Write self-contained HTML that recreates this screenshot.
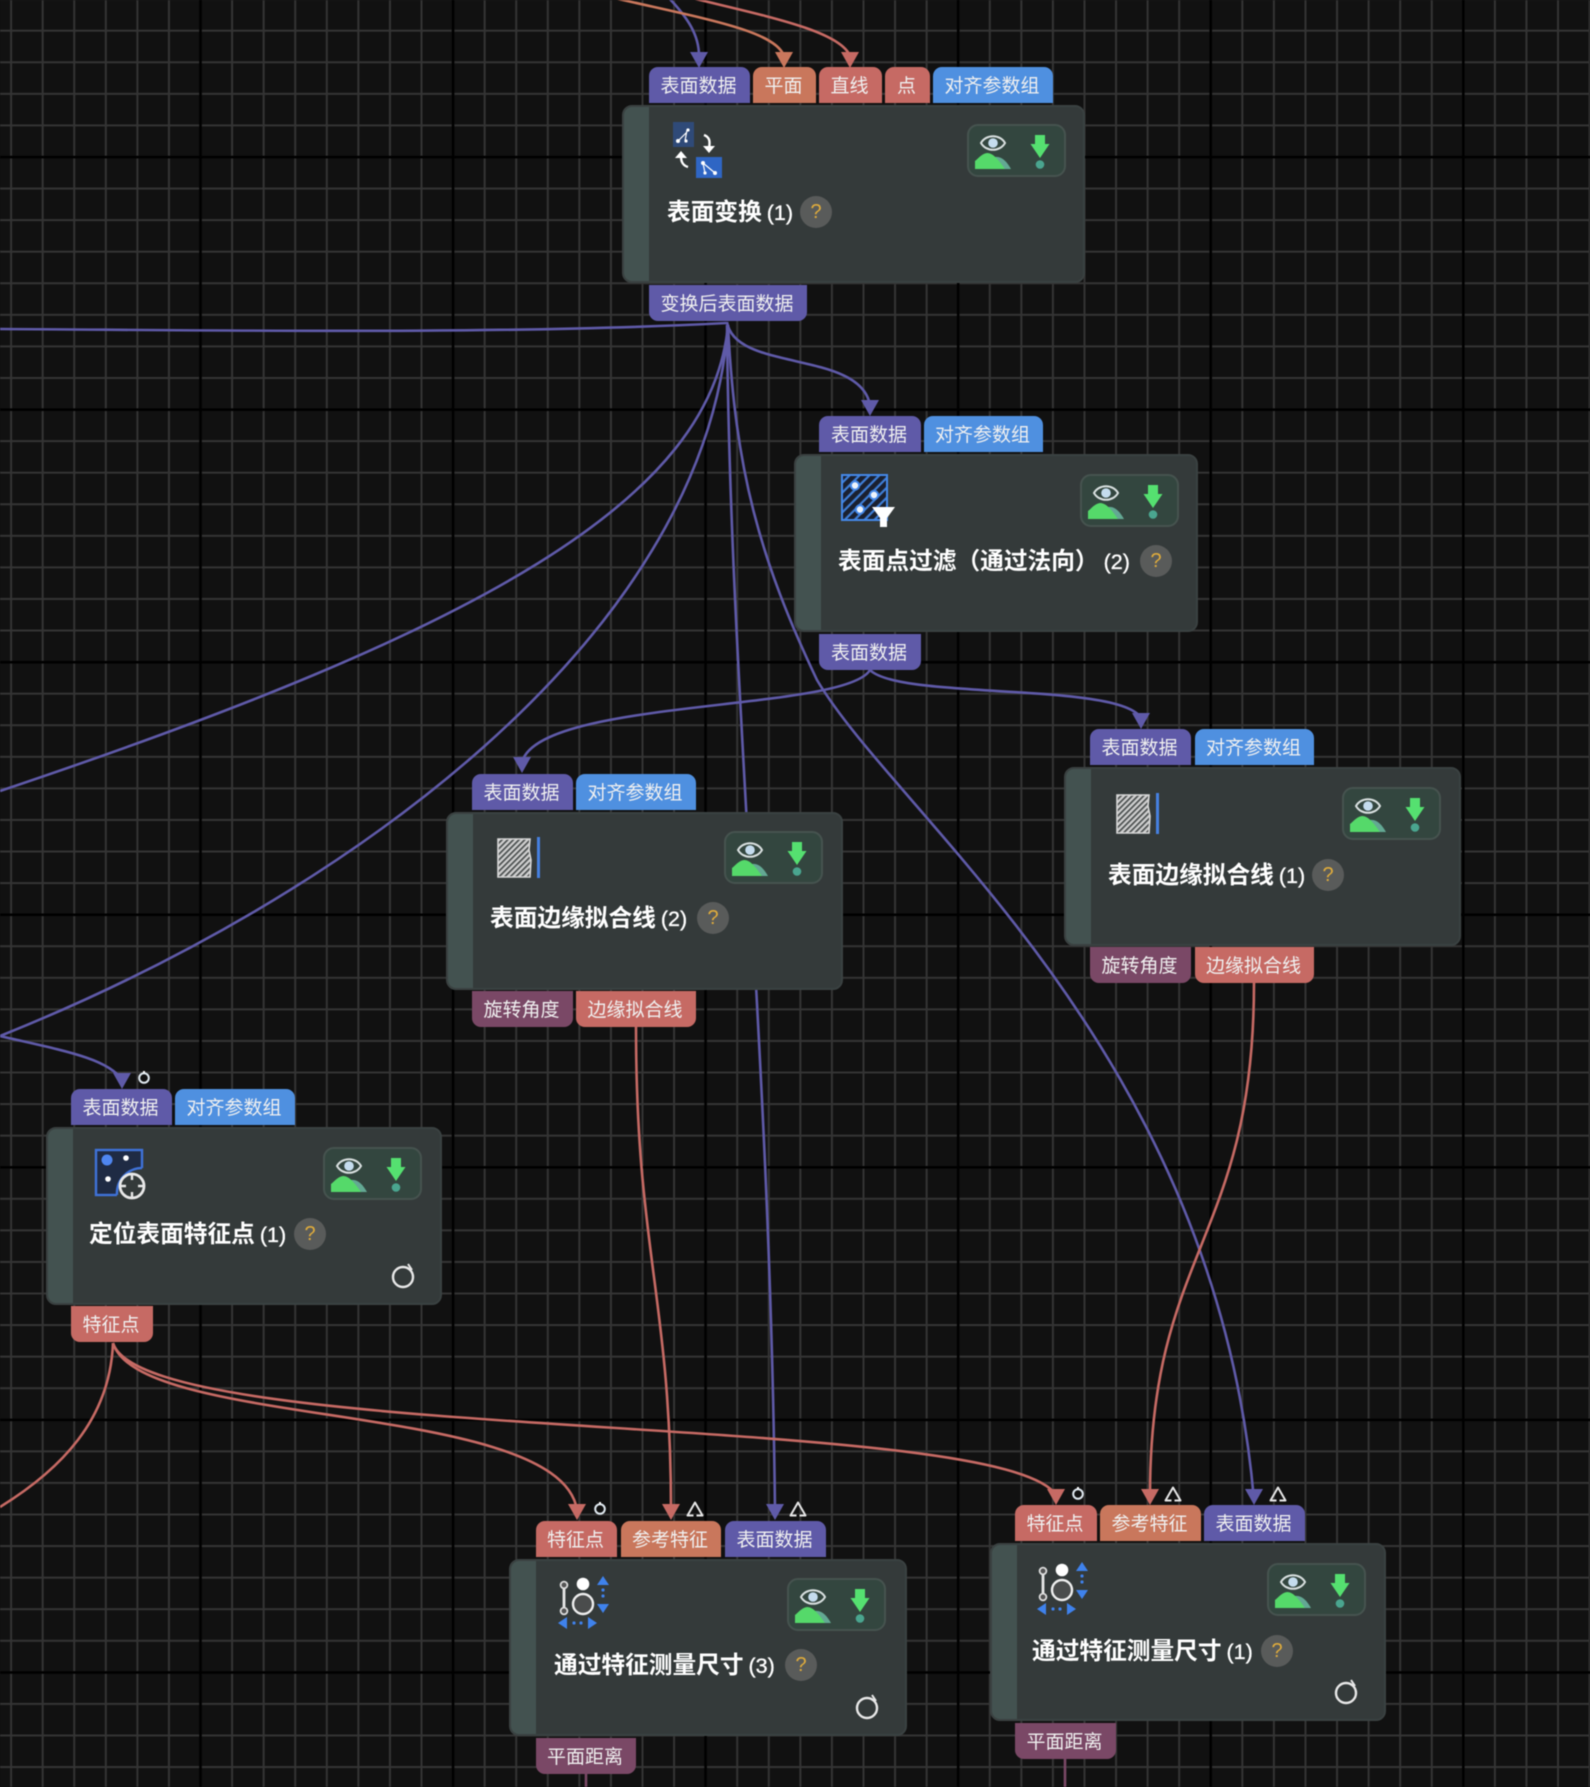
<!DOCTYPE html>
<html><head><meta charset="utf-8"><style>
html,body{margin:0;padding:0;background:#111}
#r{position:relative;width:1590px;height:1787px;overflow:hidden;background:#111;font-family:"Liberation Sans","Noto Sans CJK SC",sans-serif;color:#f2f2f2;filter:blur(.45px)}
svg.l{position:absolute;left:0;top:0}
.n{position:absolute;background:#343a3a;border:2px solid #3a4141;box-sizing:border-box;border-radius:10px;overflow:hidden}
.n i{position:absolute;left:0;top:0;bottom:0;width:25px;background:#435250}
.p{position:absolute;box-sizing:border-box;text-align:center;font-size:19px;line-height:40px;height:36px;white-space:nowrap;color:#f0f0f0;padding-right:2px;overflow:hidden}
.t{border-radius:9px 9px 0 0}.b{border-radius:0 0 9px 9px}
.pu{background:#5f5aa8}.bl{background:#4f90e0}.re{background:#c66a64}.or{background:#c9775c}.ma{background:#7a4866}
.h{position:absolute;font-weight:700;font-size:23.7px;line-height:35px;height:32px;white-space:nowrap;color:#fff}
.h span{font-weight:400;font-size:21.5px;margin-left:5px;-webkit-text-stroke:.35px #fff}
.q{position:absolute;width:32px;height:32px;border-radius:50%;background:#595b5a;color:#e0ac3c;font-size:20px;line-height:32px;text-align:center;font-weight:400}
</style></head><body><div id="r">
<svg class="l" width="1590" height="1787" viewBox="0 0 1590 1787">
<defs>
<pattern id="a" patternUnits="userSpaceOnUse" x="10.1" y="29.7" width="31.57" height="31.57"><rect width="31.57" height="31.57" fill="#111"/><rect width="2" height="31.57" fill="#343434"/><rect width="31.57" height="2" fill="#343434"/></pattern>
<pattern id="b" patternUnits="userSpaceOnUse" x="199.2" y="155.8" width="252.56" height="252.56"><rect width="2.6" height="252.56" fill="#000"/><rect width="252.56" height="2.6" fill="#000"/></pattern>
</defs>
<rect width="1590" height="1787" fill="url(#a)"/>
<rect width="1590" height="1787" fill="url(#b)"/>
<g fill="none" stroke-width="2.6">
<g stroke="#5f5aa8">
<path d="M668,-3C688,18 699,35 699,56"/>
<path d="M727,323C500,335 200,330 0,329"/>
<path d="M727,322C735,372 860,350 870,405"/>
<path d="M728,325C712,500 480,630 0,791"/>
<path d="M728,325C705,640 340,900 0,1036"/>
<path d="M0,1036C60,1050 108,1058 122,1080"/>
<path d="M727,325C730,690 770,1050 775,1510"/>
<path d="M728,325C735,470 760,560 817,680C900,820 1215,1050 1254,1500"/>
<path d="M870,670C845,712 540,698 522,762"/>
<path d="M870,670C900,700 1120,682 1141,718"/>
</g>
<path stroke="#c9775c" d="M610,-3C700,18 775,30 784,56"/>
<path stroke="#c66a64" d="M688,-3C760,15 840,30 850,56"/>
<g stroke="#c66a64">
<path d="M636,1027C636,1250 671,1300 671,1510"/>
<path d="M1254,983C1254,1240 1150,1250 1150,1495"/>
<path d="M113,1343C110,1420 60,1470 0,1507"/>
<path d="M113,1343C140,1430 560,1400 577,1510"/>
<path d="M113,1343C145,1445 1000,1410 1056,1495"/>
</g>
<path stroke="#7a4866" d="M586,1774V1787"/>
<path stroke="#7a4866" d="M1065,1759V1787"/>
</g>
<g fill="#5f5aa8"><path d="M690,52h18l-9,16z"/><path d="M861,400h18l-9,16z"/><path d="M513,757h18l-9,16z"/><path d="M1132,713h18l-9,16z"/><path d="M113,1073h18l-9,16z"/><path d="M766,1504h18l-9,16z"/><path d="M1245,1489h18l-9,16z"/></g>
<g fill="#c66a64"><path d="M841,52h18l-9,16z"/><path d="M568,1504h18l-9,16z"/><path d="M662,1504h18l-9,16z"/><path d="M1047,1489h18l-9,16z"/><path d="M1141,1489h18l-9,16z"/></g>
<path fill="#c9775c" d="M775,52h18l-9,16z"/>
</svg>

<div class="p t pu" style="left:649px;top:67px;width:101px">表面数据</div>
<div class="p t or" style="left:753px;top:67px;width:63px">平面</div>
<div class="p t re" style="left:819px;top:67px;width:63px">直线</div>
<div class="p t re" style="left:885px;top:67px;width:45px">点</div>
<div class="p t bl" style="left:933px;top:67px;width:120px">对齐参数组</div>
<div class="p b pu" style="left:649px;top:285px;width:158px">变换后表面数据</div>

<div class="p t pu" style="left:819px;top:416px;width:102px">表面数据</div>
<div class="p t bl" style="left:924px;top:416px;width:119px">对齐参数组</div>
<div class="p b pu" style="left:819px;top:634px;width:102px">表面数据</div>

<div class="p t pu" style="left:472px;top:774px;width:101px">表面数据</div>
<div class="p t bl" style="left:576px;top:774px;width:120px">对齐参数组</div>
<div class="p b ma" style="left:472px;top:991px;width:101px">旋转角度</div>
<div class="p b re" style="left:576px;top:991px;width:120px">边缘拟合线</div>

<div class="p t pu" style="left:1090px;top:729px;width:101px">表面数据</div>
<div class="p t bl" style="left:1195px;top:729px;width:119px">对齐参数组</div>
<div class="p b ma" style="left:1090px;top:947px;width:101px">旋转角度</div>
<div class="p b re" style="left:1195px;top:947px;width:119px">边缘拟合线</div>

<div class="p t pu" style="left:71px;top:1089px;width:101px">表面数据</div>
<div class="p t bl" style="left:175px;top:1089px;width:120px">对齐参数组</div>
<div class="p b re" style="left:71px;top:1306px;width:82px">特征点</div>

<div class="p t re" style="left:536px;top:1521px;width:81px">特征点</div>
<div class="p t or" style="left:621px;top:1521px;width:100px">参考特征</div>
<div class="p t pu" style="left:725px;top:1521px;width:101px">表面数据</div>
<div class="p b ma" style="left:536px;top:1738px;width:100px">平面距离</div>

<div class="p t re" style="left:1015px;top:1505px;width:82px">特征点</div>
<div class="p t or" style="left:1100px;top:1505px;width:101px">参考特征</div>
<div class="p t pu" style="left:1204px;top:1505px;width:101px">表面数据</div>
<div class="p b ma" style="left:1015px;top:1723px;width:101px">平面距离</div>

<div class="n" style="left:622px;top:105px;width:463px;height:178px"><i></i></div>
<div class="n" style="left:794px;top:454px;width:404px;height:178px"><i></i></div>
<div class="n" style="left:446px;top:812px;width:397px;height:178px"><i></i></div>
<div class="n" style="left:1064px;top:767px;width:397px;height:179px"><i></i></div>
<div class="n" style="left:46px;top:1127px;width:396px;height:178px"><i></i></div>
<div class="n" style="left:509px;top:1559px;width:398px;height:177px"><i></i></div>
<div class="n" style="left:990px;top:1543px;width:396px;height:178px"><i></i></div>

<div class="h" style="left:667px;top:196px">表面变换<span>(1)</span></div><div class="q" style="left:800px;top:196px">?</div>
<div class="h" style="left:838px;top:545px">表面点过滤（通过法向）<span>(2)</span></div><div class="q" style="left:1140px;top:545px">?</div>
<div class="h" style="left:490px;top:902px">表面边缘拟合线<span>(2)</span></div><div class="q" style="left:697px;top:902px">?</div>
<div class="h" style="left:1108px;top:859px">表面边缘拟合线<span>(1)</span></div><div class="q" style="left:1312px;top:859px">?</div>
<div class="h" style="left:89px;top:1218px">定位表面特征点<span>(1)</span></div><div class="q" style="left:294px;top:1218px">?</div>
<div class="h" style="left:554px;top:1649px">通过特征测量尺寸<span>(3)</span></div><div class="q" style="left:785px;top:1649px">?</div>
<div class="h" style="left:1032px;top:1635px">通过特征测量尺寸<span>(1)</span></div><div class="q" style="left:1261px;top:1635px">?</div>

<svg class="l" width="1590" height="1787" viewBox="0 0 1590 1787">
<defs>
<g id="st">
<rect x="1" y="1" width="97" height="51" rx="10" fill="#33463f" stroke="#46534f" stroke-width="2"/>
<path d="M14,19C19,10 33,10 38,19C33,28 19,28 14,19Z" fill="none" stroke="#d8dfdf" stroke-width="2"/>
<circle cx="26" cy="19" r="4.8" fill="#c5dcee"/>
<path d="M28,33C35,32 40,38 44,45H30Z" fill="#63a893"/>
<path d="M8,45V37C11,35 14,30 20,29C27,29 33,38 38,45Z" fill="#55d96a"/>
<path d="M68,11H78V20H82.500L73,34L63.500,20H68Z" fill="#55e070"/>
<circle cx="73" cy="40.500" r="4.300" fill="#4aa58f"/>
</g>
<g id="rf" fill="none"><circle r="10" stroke="#e8e8e8" stroke-width="2.4"/><path d="M5,-13L9,-7" stroke="#e8e8e8" stroke-width="2"/></g>
<g id="ri"><circle r="4.8" fill="none" stroke="#dfe8ef" stroke-width="2"/><path d="M-1,-7h2v2h-2z" fill="#fff"/></g>
<g id="tr" fill="none" stroke="#e6e6e6" stroke-width="2" stroke-linejoin="round"><path d="M0,-7.500L7.500,5.500H-7.500Z"/><path d="M-1.500,5.500H1.500" stroke="#111" stroke-width="2.400"/></g>
<pattern id="h1" patternUnits="userSpaceOnUse" width="4" height="4" patternTransform="rotate(-45)"><rect width="4" height="4" fill="#d0d0d0"/><rect width="4" height="1.700" fill="#4a4e4e"/></pattern>
<pattern id="h2" patternUnits="userSpaceOnUse" width="7" height="7" patternTransform="rotate(-45)"><rect width="7" height="7" fill="#3f7fd8"/><rect width="7" height="4.800" fill="#1a2030"/></pattern>
<g id="ed"><path d="M1,1H33L32,12L34,22L33,39H1Z" fill="url(#h1)" stroke="#d8d8d8" stroke-width="1.6"/><rect x="40" y="-1" width="3" height="41" fill="#4580e0"/></g>
<g id="me">
<path d="M0,5V28" stroke="#e6e6e6" stroke-width="2.8"/>
<circle cy="3" r="3.4" fill="#555" stroke="#ddd" stroke-width="1.8"/><circle cy="29" r="3.4" fill="#555" stroke="#ddd" stroke-width="1.8"/>
<circle cx="19" cy="2" r="6.300" fill="#fff"/><circle cx="19" cy="22" r="10" fill="#4a4c4c" stroke="#eee" stroke-width="2.4"/>
<g fill="#3f82ec"><path d="M39,-6L45,3H33Z"/><circle cx="39" cy="8" r="1.6"/><circle cx="39" cy="14" r="1.6"/><path d="M39,31L45,22H33Z"/>
<path d="M-6,41L3,35V47Z"/><circle cx="10" cy="41" r="1.6"/><circle cx="17" cy="41" r="1.6"/><path d="M33,41L24,35V47Z"/></g>
</g>
</defs>
<use href="#st" x="967" y="124"/><use href="#st" x="1080" y="474"/><use href="#st" x="724" y="831"/><use href="#st" x="1342" y="787"/><use href="#st" x="323" y="1147"/><use href="#st" x="787" y="1578"/><use href="#st" x="1267" y="1563"/>

<!-- node 1 icon -->
<rect x="673" y="122" width="21" height="25" fill="#2f4a78"/>
<rect x="696" y="157" width="26" height="21" fill="#2f66c4"/>
<g stroke="#fff" stroke-width="1.200" fill="none"><path d="M687,130L685,141M678,141L687,132"/><path d="M703,163L705,173M703,163L715,173"/></g>
<g fill="#fff"><circle cx="688" cy="130" r="1.600"/><circle cx="678" cy="141" r="2"/><circle cx="686" cy="141" r="1.600"/><circle cx="703" cy="163" r="2"/><circle cx="705" cy="173" r="1.600"/><circle cx="715" cy="173" r="2"/></g>
<g fill="none" stroke="#fff" stroke-width="2.4"><path d="M704,135C712,138 709,145 709,150"/><path d="M688,167C681,165 681,159 681,155"/></g>
<g fill="#fff"><path d="M703,146h12l-6,7z"/><path d="M675,158h12l-6,-7z"/></g>

<!-- node 2 icon -->
<rect x="842" y="475" width="45" height="45" fill="url(#h2)" stroke="#4488e8" stroke-width="2"/>
<g fill="#eef3fa" stroke="#4488e8" stroke-width="2"><circle cx="855" cy="485.500" r="4.200"/><circle cx="874" cy="495" r="4.200"/><circle cx="860" cy="509.500" r="4.200"/></g>
<path d="M872,507H895L887,518V527H880V518Z" fill="#fff"/>

<use href="#ed" x="497" y="838"/><use href="#ed" x="1116" y="794"/>

<!-- node 5 icon -->
<rect x="96" y="1150" width="46" height="45" fill="#1f2b44" stroke="#3f72d8" stroke-width="2.400"/>
<circle cx="107" cy="1160" r="5.500" fill="#4f86f0"/><circle cx="126" cy="1158" r="2.800" fill="#fff"/><circle cx="108" cy="1179" r="2.800" fill="#fff"/>
<path d="M117,1197C116,1180 128,1168 144,1168V1197Z" fill="#343a3a"/>
<path d="M117,1195C116,1180 128,1168 142,1168" fill="none" stroke="#3f72d8" stroke-width="2.400"/>
<circle cx="132" cy="1186" r="12" fill="#343a3a" stroke="#e8e8e8" stroke-width="2.800"/>
<path d="M132,1174V1180M132,1192V1198M120,1186H126M138,1186H144" stroke="#e8e8e8" stroke-width="2.400"/>

<use href="#me" x="564" y="1582"/><use href="#me" x="1043" y="1568"/>
<use href="#rf" x="403" y="1277"/><use href="#rf" x="867" y="1708"/><use href="#rf" x="1346" y="1693"/>
<use href="#ri" x="144" y="1078"/><use href="#ri" x="600" y="1509"/><use href="#ri" x="1078" y="1494"/>
<use href="#tr" x="695" y="1510"/><use href="#tr" x="798" y="1510"/><use href="#tr" x="1173" y="1495"/><use href="#tr" x="1278" y="1495"/>
</svg>
</div></body></html>
